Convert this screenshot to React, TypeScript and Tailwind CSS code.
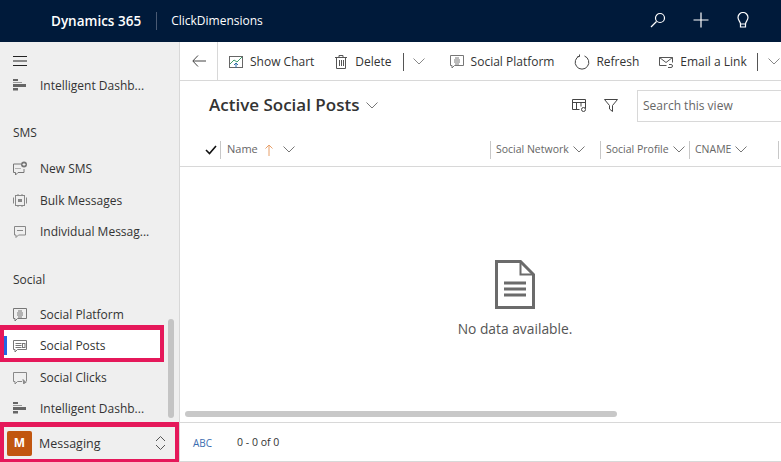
import React from 'react';

const FONT = '[font-family:"Open_Sans","Noto_Sans",sans-serif]';

function Icon({ children, size = 16, className = '' }: { children: React.ReactNode; size?: number; className?: string }) {
  return (
    <svg width={size} height={size} viewBox="0 0 16 16" fill="none" stroke="currentColor" strokeWidth="1" className={`shrink-0 ${className}`}>
      {children}
    </svg>
  );
}

const Chevron = ({ className = '' }: { className?: string }) => (
  <svg width="12" height="7" viewBox="0 0 12 7" fill="none" stroke="currentColor" strokeWidth="1" className={`shrink-0 ${className}`}>
    <path d="M0.5 0.5 L6 6 L11.5 0.5" />
  </svg>
);

const DashIcon = () => (
  <Icon className="text-[#666]">
    <rect x="1" y="1" width="5" height="2" fill="currentColor" stroke="none" />
    <rect x="1" y="4" width="9" height="1" fill="#999" stroke="none" />
    <rect x="1" y="6" width="13" height="3" fill="currentColor" stroke="none" />
    <rect x="1" y="10" width="5" height="2.5" fill="currentColor" stroke="none" />
  </Icon>
);

const NewSmsIcon = () => (
  <Icon className="text-[#777]">
    <path d="M9 3H1.500v8.500h2V14l2.500-2.500h6V8" />
    <path d="M3.500 7.500h5" strokeDasharray="1 1" />
    <circle cx="12" cy="3.500" r="3" fill="currentColor" stroke="none" />
    <path d="M10.500 3.500h3M12 2v3" stroke="#efefef" />
  </Icon>
);

const BulkIcon = () => (
  <Icon className="text-[#888]">
    <rect x="3.500" y="2.500" width="9" height="10" />
    <path d="M1.500 4.500v6M14.500 4.500v6M6 1v2M10 1v2M6 12v2M10 12v2" />
    <rect x="6" y="6" width="4" height="3" fill="currentColor" stroke="none" />
  </Icon>
);

const ChatIcon = () => (
  <Icon className="text-[#888]">
    <path d="M2.500 2.500h11v8.500h-7l-2.500 2.500V11h-1.500z" />
    <path d="M5 6.500h6" />
  </Icon>
);

const PlatformIcon = () => (
  <Icon className="text-[#777]">
    <path d="M1.500 1.500h13v10h-9l-2.500 2.500v-2.500h-1.500z" />
    <path d="M6 4h4M5 6h6M5 8h6M6 10h4" />
  </Icon>
);

const PostsIcon = () => (
  <Icon className="text-[#777]">
    <path d="M1.500 2.500h13v9h-9l-2.500 2.500v-2.500h-1.500z" />
    <path d="M3.500 5.500h6M3.500 7.500h6M3.500 9.500h6" />
    <rect x="10.500" y="5.500" width="2.500" height="4" />
  </Icon>
);

const ClicksIcon = () => (
  <Icon className="text-[#888]">
    <path d="M10 11.500H5.500L3 14v-2.500H1.500v-9h13v9" />
    <path d="M11 9.500l3 3-1.500.2-.7 1.300z" fill="currentColor" />
  </Icon>
);

function NavRow({ icon, label }: { icon: React.ReactNode; label: string }) {
  return (
    <div className="flex h-[31.5px] items-center pl-[12px] text-[12px] text-[#333]">
      <span className="flex w-[28px]">{icon}</span>
      <span>{label}</span>
    </div>
  );
}

function Sidebar() {
  return (
    <aside className="flex w-[180px] shrink-0 flex-col border-r border-[#d8d8d8] bg-[#efefef]">
      <div className="relative min-h-0 flex-1 overflow-hidden">
        <div className="h-[28px] pl-[13px] pt-[13px]">
          <svg width="14" height="12" viewBox="0 0 14 12" stroke="#222" strokeWidth="1">
            <path d="M0 1.500h14M0 6h14M0 10.500h14" />
          </svg>
        </div>
        <NavRow icon={<DashIcon />} label="Intelligent Dashb..." />
        <div className="mt-[21px] h-[20px] pl-[13px] text-[12px] leading-[20px] text-[#333]">SMS</div>
        <div className="mt-[11px]" />
        <NavRow icon={<NewSmsIcon />} label="New SMS" />
        <NavRow icon={<BulkIcon />} label="Bulk Messages" />
        <NavRow icon={<ChatIcon />} label="Individual Messag..." />
        <div className="mt-[22px] h-[20px] pl-[13px] text-[12px] leading-[20px] text-[#333]">Social</div>
        <div className="mt-[9px]" />
        <NavRow icon={<PlatformIcon />} label="Social Platform" />
        <div className="relative -mt-[6px] flex h-[37px] w-[164px] items-center border-x-4 border-t-[5px] border-b-4 border-[#e5185a] bg-white pt-[4px] text-[12px] text-[#333]">
          <span className="h-[19px] w-[3px] bg-[#2266e3]" />
          <span className="ml-[5px] flex w-[28px]"><PostsIcon /></span>
          <span>Social Posts</span>
        </div>
        <div className="mt-[0.5px]" />
        <NavRow icon={<ClicksIcon />} label="Social Clicks" />
        <NavRow icon={<DashIcon />} label="Intelligent Dashb..." />
        <div className="absolute left-[168px] top-[277px] h-[99px] w-[6px] rounded-full bg-[#c4c4c4]" />
      </div>
      <div className="flex h-[40px] w-[179px] items-center border-x-4 border-t-[5px] border-b-[3px] border-[#e5185a] bg-[#efefef] pl-[3px] text-[#333]">
        <span className="flex h-[25px] w-[25px] items-center justify-center rounded-[2px] bg-[#c1560f] text-[12px] font-bold text-white">M</span>
        <span className="ml-[7px] flex-1 pt-[2px] text-[12.5px]">Messaging</span>
        <svg width="11" height="16" viewBox="0 0 11 16" fill="none" stroke="#555" className="mr-[9px]">
          <path d="M1 6l4.500-4.500L10 6M1 10l4.500 4.500L10 10" />
        </svg>
      </div>
    </aside>
  );
}

function CmdButton({ icon, label }: { icon: React.ReactNode; label: string }) {
  return (
    <div className="flex items-center gap-[6px] text-[12px] text-[#333]">
      {icon}
      <span>{label}</span>
    </div>
  );
}

function CommandBar() {
  return (
    <div className="flex h-[39px] shrink-0 items-center overflow-hidden border-b border-[#d8d8d8] pt-[1px]">
      <div className="-mt-[1px] flex h-[39px] w-[38px] shrink-0 items-center justify-center border-r border-[#d8d8d8]">
        <svg width="14" height="12" viewBox="0 0 14 12" fill="none" stroke="#444">
          <path d="M6 .5L.8 6l5.200 5.500M1 6h13" />
        </svg>
      </div>
      <div className="ml-[10px] flex items-center whitespace-nowrap">
        <CmdButton
          label="Show Chart"
          icon={
            <Icon className="text-[#666]">
              <rect x="1.500" y="2.500" width="13" height="11" />
              <path d="M2 10l4-4 3 2 5-5" stroke="#3f9c6d" />
              <path d="M8 14V9M6 11l2-2 2 2" stroke="#2d6ea8" />
            </Icon>
          }
        />
        <div className="ml-[19px]">
          <CmdButton
            label="Delete"
            icon={
              <Icon className="text-[#555]">
                <path d="M2 3.500h12M6 3.500V1.500h4v2M3.500 3.500v11h9v-11M6.500 6v6M8.500 6v6M10.500 6v6" />
              </Icon>
            }
          />
        </div>
        <div className="ml-[11px] h-[18px] w-px bg-[#555]" />
        <Chevron className="ml-[9px] text-[#888]" />
        <div className="ml-[24px]">
          <CmdButton label="Social Platform" icon={<PlatformIcon />} />
        </div>
        <div className="ml-[20px]">
          <CmdButton
            label="Refresh"
            icon={
              <Icon className="text-[#444]">
                <path d="M10.500 2A6.800 6.800 0 1 1 5.500 2" />
                <path d="M5.500 0.500V2.500H3.500" />
              </Icon>
            }
          />
        </div>
        <div className="ml-[19px]">
          <CmdButton
            label="Email a Link"
            icon={
              <Icon className="text-[#555]">
                <path d="M1.500 3.500h13v5M1.500 3.500v8h7M1.500 3.500l6.500 5 6.500-5" />
                <path d="M10 13.500h3a1.500 1.500 0 0 0 0-3h-2" />
              </Icon>
            }
          />
        </div>
        <div className="ml-[10px] h-[18px] w-px bg-[#555]" />
        <Chevron className="ml-[10px] text-[#888]" />
      </div>
    </div>
  );
}

function ColHead({ label, width }: { label: string; width: number }) {
  return (
    <div style={{ width }} className="flex h-[18px] shrink-0 items-center border-l border-[#c8c8c8] pl-[5px] text-[10.5px] text-[#666]">
      <span>{label}</span>
      <Chevron className="ml-[4px] text-[#777]" />
    </div>
  );
}

export default function App() {
  return (
    <div className={`flex h-[462px] w-[781px] flex-col overflow-hidden bg-white ${FONT}`}>
      <header className="flex h-[42px] shrink-0 items-center bg-[#001a3a] text-white">
        <span className="ml-[51px] text-[13.5px] font-semibold">Dynamics 365</span>
        <div className="ml-[15px] h-[18px] w-px bg-[#4a5a73]" />
        <span className="ml-[14px] text-[12px]">ClickDimensions</span>
        <div className="ml-auto mr-[31px] flex items-center gap-[27px] pb-[2px]">
          <svg width="16" height="16" viewBox="0 0 16 16" fill="none" stroke="white" strokeWidth="1.2">
            <circle cx="10" cy="6" r="4.500" />
            <path d="M6.500 9.500L1 15" />
          </svg>
          <svg width="16" height="16" viewBox="0 0 16 16" fill="none" stroke="white" strokeWidth="1.2">
            <path d="M0.500 8h15M8 0.500v15" />
          </svg>
          <svg width="14" height="16" viewBox="0 0 14 16" fill="none" stroke="white" strokeWidth="1.2">
            <path d="M4.500 12C4.500 9.500 2 8.500 2 5.500a5 5 0 0 1 10 0c0 3-2.500 4-2.500 6.500z" />
            <path d="M4.500 12v3h5v-3" />
          </svg>
        </div>
      </header>

      <div className="flex min-h-0 flex-1">
        <Sidebar />
        <main className="flex min-w-0 flex-1 flex-col">
          <CommandBar />

          <div className="flex h-[48px] shrink-0 items-center">
            <span className="ml-[29px] text-[17px] font-semibold text-[#333]">Active Social Posts</span>
            <Chevron className="ml-[7px] text-[#777]" />
            <div className="ml-auto flex items-center">
              <Icon className="text-[#444]">
                <path d="M1.500 2.500h13v9" />
                <path d="M1.500 2.500v10h7M1.500 5.500h13M5.500 5.500v7M10 5.500v4" />
                <circle cx="12.500" cy="12.500" r="2" />
              </Icon>
              <div className="ml-[16px]">
                <Icon className="text-[#444]">
                  <path d="M1.500 2.500h13L9.500 8.500v6l-3-2.500v-3.500z" />
                </Icon>
              </div>
              <div className="ml-[18px] mt-[2px] flex h-[32px] w-[144px] items-center border border-r-0 border-[#d8d8d8] pl-[5px] text-[12px] text-[#666]">
                Search this view
              </div>
            </div>
          </div>

          <div className="flex h-[38px] shrink-0 items-center border-b border-[#d8d8d8] pt-[4px]">
            <svg width="12" height="10" viewBox="0 0 12 10" fill="none" stroke="#111" strokeWidth="1.600" className="ml-[25px]">
              <path d="M1 5l3.500 3.500L11 1" />
            </svg>
            <div className="ml-[3px] flex h-[18px] w-[270px] shrink-0 items-center border-l border-[#c8c8c8] pl-[6px] text-[11px] text-[#666]">
              <span>Name</span>
              <svg width="10" height="12" viewBox="0 0 10 12" fill="none" stroke="#e8a06a" className="ml-[6px]">
                <path d="M5 12V1M1.500 4.500L5 1l3.500 3.500" />
              </svg>
              <Chevron className="ml-[9px] text-[#777]" />
            </div>
            <ColHead label="Social Network" width={110} />
            <ColHead label="Social Profile" width={89} />
            <ColHead label="CNAME" width={89} />
            <div className="h-[18px] w-px bg-[#c8c8c8]" />
          </div>

          <div className="relative flex min-h-0 flex-1 flex-col items-center pl-[69px]">
            <svg width="40" height="49" viewBox="0 0 40 49" fill="none" stroke="#6b6b6b" strokeWidth="3" className="mt-[93px]">
              <path d="M1.500 1.500h24l13 13v33h-37z" />
              <path d="M25.500 1.500v13h13" strokeWidth="2" />
              <path d="M9 23h22M9 29h22M9 35h22" />
            </svg>
            <div className="mt-[10px] text-[13.8px] text-[#555]">No data available.</div>
            <div className="absolute bottom-[5px] left-[5px] h-[6px] w-[432px] rounded-full bg-[#c8c8c8]" />
          </div>

          <footer className="flex h-[40px] shrink-0 items-center border-y border-[#d8d8d8] pt-[2px] text-[10px]">
            <span className="ml-[13px] text-[#3b6db0]">ABC</span>
            <span className="ml-[25px] text-[10.5px] text-[#333]">0 - 0 of 0</span>
          </footer>
        </main>
      </div>
    </div>
  );
}
